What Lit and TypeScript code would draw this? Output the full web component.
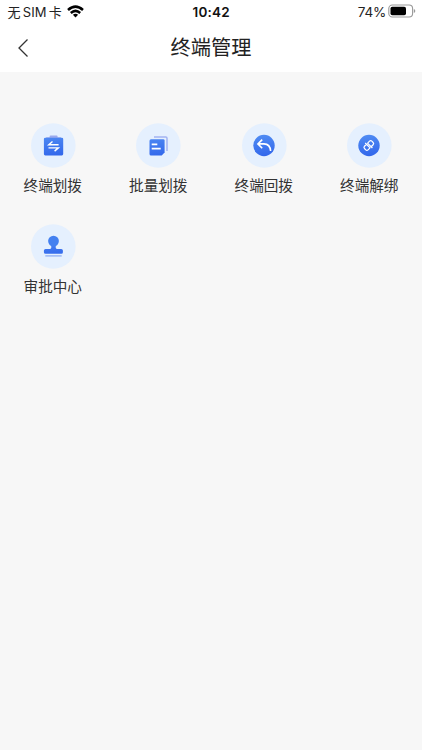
import { LitElement, html, css, svg } from "lit";
import { customElement } from "lit/decorators.js";

const icons = {
  transfer: svg`
    <path d="M18.600 15v-1.500q0-1 1-1h6q1 0 1 1V15M14.800 15.300l.6-1h14.400l.6 1z" fill="#9aa9ee"/>
    <rect x="12.900" y="14.700" width="19.300" height="17.700" rx="1.400" fill="url(#g)"/>
    <path d="M27.600 21.700H17.800l3.700-3.200M17.500 24.900h9.800l-3.700 3.200" fill="none" stroke="#fff" stroke-width="1.400"/>`,
  batch: svg`
    <path d="M18 13.900h11.700q1.300 0 1.300 1.300V28" fill="none" stroke="#a3b3f2" stroke-width="1.500"/>
    <path d="M15 16.200h12.200q1.400 0 1.400 1.400v12l-2.900 2.900H15q-1.500 0-1.500-1.500V17.700q0-1.500 1.500-1.500z" fill="url(#g)"/>
    <path d="M15.700 21.300h5.600M15.700 25.600h9" fill="none" stroke="#fff" stroke-width="1.700"/>`,
  back: svg`
    <circle cx="22" cy="22.500" r="10.700" fill="url(#g)"/>
    <path d="M20.200 16.600l-4.300 4.300 4.300 4.300M16.100 20.900h5.900q6.200.2 6.600 7.100" fill="none" stroke="#fff" stroke-width="1.600"/>`,
  unbind: svg`
    <circle cx="22" cy="22.500" r="10.700" fill="url(#g)"/>
    <g transform="translate(21.800 22.500) rotate(-45)" fill="none" stroke="#fff" stroke-width="1.200">
      <path d="M-.8 2.500H-3.600Q-5.200 2.500-5.200.9V-.9Q-5.200-2.500-3.600-2.500H-.8M.8-2.500H3.600Q5.200-2.500 5.200-.9V.9Q5.200 2.500 3.600 2.500H.8M-.8-4.300V3M.8-3V4.300"/>
    </g>`,
  stamp: svg`
    <path d="M20.300 20.500h4.400v3.100q0 1.300 1.300 1.300h4.200q1.700 0 1.700 1.700V28.300q0 1.500-1.500 1.500H14.600q-1.700 0-1.700-1.500v-1.700q0-1.700 1.700-1.700h4.400q1.300 0 1.300-1.300z" fill="url(#g)"/>
    <circle cx="22.500" cy="17.100" r="5.400" fill="#4380f0"/>
    <path d="M14.300 31.900h16.400" stroke="#91aff3" stroke-width="1.300"/>`,
};

const entries = [
  { label: "终端划拨", icon: icons.transfer },
  { label: "批量划拨", icon: icons.batch },
  { label: "终端回拨", icon: icons.back },
  { label: "终端解绑", icon: icons.unbind },
  { label: "审批中心", icon: icons.stamp },
];

@customElement("menu-entry")
class MenuEntry extends LitElement {
  static properties = { label: {}, icon: { attribute: false } };
  declare label: string;
  declare icon: unknown;

  static styles = css`
    :host { display: flex; flex-direction: column; align-items: center; height: 101px; }
    .icon { display: block; width: 45px; height: 45px; margin-left: 0.600px; }
    .label { margin-top: 7px; font-size: 14.600px; line-height: 22px; color: #333; white-space: nowrap; }
  `;

  render() {
    return html`
      <svg class="icon" viewBox="0 0 45 45">
        <defs>
          <linearGradient id="g" gradientUnits="userSpaceOnUse" x1="20" y1="12" x2="23" y2="33">
            <stop offset="0" stop-color="#4f8bf3" />
            <stop offset="1" stop-color="#3267eb" />
          </linearGradient>
        </defs>
        <circle cx="22.300" cy="22.500" r="22.300" fill="#e5f0fe" />
        ${this.icon}
      </svg>
      <span class="label">${this.label}</span>
    `;
  }
}

@customElement("app-root")
class AppRoot extends LitElement {
  static styles = css`
    :host {
      display: flex; flex-direction: column; height: 750px; background: #f7f7f7;
      font-family: "Liberation Sans", "Noto Sans CJK SC", sans-serif; color: #222;
    }
    .top { background: #fff; height: 72px; }
    .status {
      display: grid; grid-template-columns: 1fr auto 1fr; align-items: center;
      height: 23px; padding: 0 7px 0 7.500px; box-sizing: border-box;
    }
    .left, .right { display: flex; align-items: center; }
    .right { justify-content: flex-end; font-family: Inter, sans-serif; font-size: 13.500px; letter-spacing: -0.200px; }
    .carrier {
      display: flex; gap: 2.300px; align-items: baseline; line-height: 18px;
      font-family: Inter, "Noto Sans CJK SC", sans-serif; font-size: 13px;
    }
    .wifi { width: 17px; height: 13px; margin-left: 5px; }
    .time { font-family: Inter, sans-serif; font-weight: 600; font-size: 13.500px; letter-spacing: 0.200px; color: #111; }
    .battery { width: 28px; height: 14px; margin: 0 -0.500px 1px 1.500px; }
    .nav { display: grid; grid-template-columns: 48px 1fr 48px; align-items: center; height: 49px; }
    .chevron { width: 12px; height: 20px; margin-left: 17px; }
    .title { text-align: center; font-size: 20.200px; line-height: 28px; }
    .grid { display: grid; grid-template-columns: repeat(4, 1fr); padding-top: 50.500px; }
  `;

  render() {
    return html`
      <header class="top">
        <div class="status">
          <div class="left">
            <div class="carrier"><span>无</span><span>SIM</span><span>卡</span></div>
            <svg class="wifi" viewBox="0 0 17 13">
              <g fill="none" stroke="#000" stroke-width="2.500">
                <path d="M1 5Q8.500-1.800 16 5" />
                <path d="M3.800 8Q8.500 3.700 13.200 8" />
              </g>
              <path d="M5.900 9.800Q8.500 7.700 11.100 9.800L8.500 12.500z" fill="#000" />
            </svg>
          </div>
          <span class="time">10:42</span>
          <div class="right">
            <span>74%</span>
            <svg class="battery" viewBox="0 0 28 14">
              <rect x="0.800" y="1" width="23.800" height="12" rx="3.500" fill="none" stroke="#999" stroke-width="1.100" />
              <rect x="2.500" y="2.700" width="15.500" height="8.600" rx="1.800" fill="#000" />
              <path d="M25.800 5v4q1.500-.6 1.500-2t-1.500-2z" fill="#999" />
            </svg>
          </div>
        </div>
        <div class="nav">
          <svg class="chevron" viewBox="0 0 12 20" fill="none" stroke="#333" stroke-width="1.300">
            <path d="M10.500 1.500L2 10l8.500 8.500" />
          </svg>
          <span class="title">终端管理</span>
        </div>
      </header>
      <main class="grid">
        ${entries.map((e) => html`<menu-entry .label=${e.label} .icon=${e.icon}></menu-entry>`)}
      </main>
    `;
  }
}
